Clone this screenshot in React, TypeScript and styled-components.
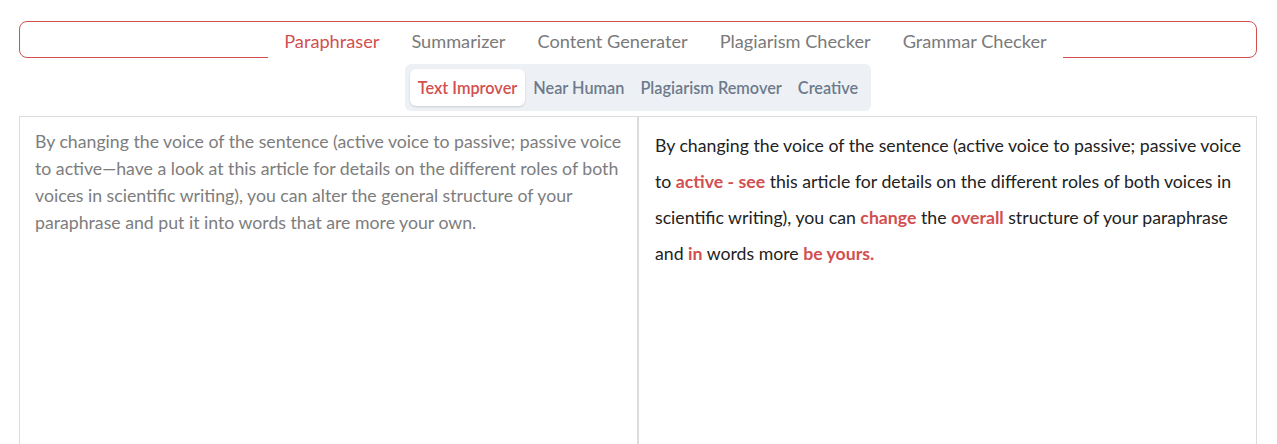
import React, { useState } from 'react';
import styled, { createGlobalStyle } from 'styled-components';

const GlobalStyle = createGlobalStyle`
  body {
    margin: 0;
    background: #ffffff;
    font-family: Lato, "Open Sans", Arial, sans-serif;
  }
`;

const Page = styled.div`
  padding: 21px 20px 0 19px;
`;

const MainNav = styled.nav`
  display: flex;
  justify-content: center;
  align-items: stretch;
  height: 35px;
  padding-left: 55px;
  border: 1px solid #d24f4f;
  border-radius: 8px;
`;

const MainTab = styled.button<{ $active: boolean }>`
  display: flex;
  align-items: center;
  padding: 2px 16px 0;
  margin-bottom: -1px;
  background: #fff;
  border: none;
  border-bottom: 1px solid ${p => (p.$active ? '#fff' : 'transparent')};
  font-family: inherit;
  font-size: 18.2px;
  color: ${p => (p.$active ? '#d24f4f' : '#7a7a7a')};
  cursor: pointer;
`;

const SubRow = styled.div`
  display: flex;
  justify-content: center;
  margin: 6px 0 5px;
`;

const SubPill = styled.div`
  display: flex;
  padding: 5px;
  background: #edf1f5;
  border-radius: 6px;
`;

const SubTab = styled.button<{ $active: boolean }>`
  height: 37px;
  padding: 0 8px;
  border: none;
  border-radius: 6px;
  background: ${p => (p.$active ? '#fff' : 'transparent')};
  box-shadow: ${p => (p.$active ? '0 1px 2px rgba(0,0,0,0.15)' : 'none')};
  font-family: inherit;
  font-weight: 600;
  font-size: 16.3px;
  color: ${p => (p.$active ? '#d24f4f' : '#6e7a8c')};
  cursor: pointer;
`;

const Panels = styled.div`
  display: grid;
  grid-template-columns: 1fr 1fr;
  height: 420px;
  border: 1px solid #dcdcdc;
`;

const InputPane = styled.div`
  padding: 11px 15px;
  border-right: 1px solid #dcdcdc;
  font-size: 17.7px;
  line-height: 27px;
  color: #7d7d7d;
`;

const OutputPane = styled.div`
  padding: 11px 12px 11px 16px;
  border-left: 1px solid #dcdcdc;
  font-size: 17.7px;
  line-height: 36px;
  color: #222;
`;

const Changed = styled.span`
  color: #d24f4f;
  font-weight: 700;
`;

const mainTabs = ['Paraphraser', 'Summarizer', 'Content Generater', 'Plagiarism Checker', 'Grammar Checker'];
const modes = ['Text Improver', 'Near Human', 'Plagiarism Remover', 'Creative'];

export default function App() {
  const [tab, setTab] = useState('Paraphraser');
  const [mode, setMode] = useState('Text Improver');

  return (
    <Page>
      <GlobalStyle />
      <MainNav>
        {mainTabs.map(t => (
          <MainTab key={t} $active={tab === t} onClick={() => setTab(t)}>
            {t}
          </MainTab>
        ))}
      </MainNav>
      <SubRow>
        <SubPill>
          {modes.map(m => (
            <SubTab key={m} $active={mode === m} onClick={() => setMode(m)}>
              {m}
            </SubTab>
          ))}
        </SubPill>
      </SubRow>
      <Panels>
        <InputPane>
          By changing the voice of the sentence (active voice to passive; passive voice to
          active—have a look at this article for details on the different roles of both voices in
          scientific writing), you can alter the general structure of your paraphrase and put it
          into words that are more your own.
        </InputPane>
        <OutputPane>
          By changing the voice of the sentence (active voice to passive; passive voice to{' '}
          <Changed>active - see</Changed> this article for details on the different roles of both
          voices in scientific writing), you can <Changed>change</Changed> the{' '}
          <Changed>overall</Changed> structure of your paraphrase and <Changed>in</Changed> words
          more <Changed>be yours.</Changed>
        </OutputPane>
      </Panels>
    </Page>
  );
}
